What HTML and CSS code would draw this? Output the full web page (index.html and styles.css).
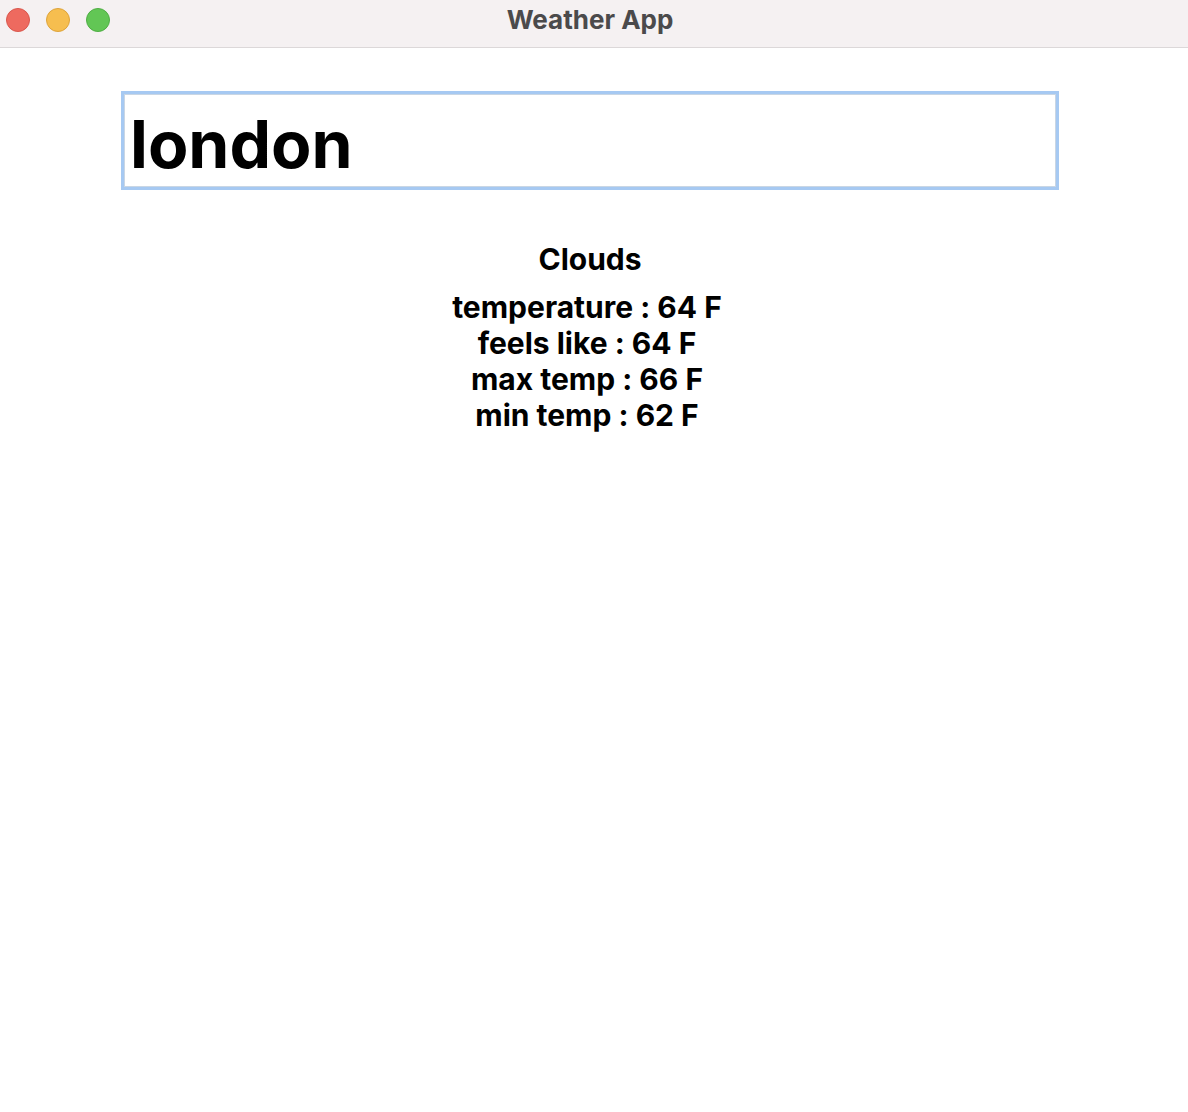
FILE: index.html
```html
<!DOCTYPE html>
<html>
<head>
<meta charset="utf-8">
<link rel="stylesheet" href="styles.css">
</head>
<body>
<div class="window">
  <header class="titlebar">
    <div class="lights">
      <span class="light red"></span>
      <span class="light yellow"></span>
      <span class="light green"></span>
    </div>
    <div class="title">Weather App</div>
  </header>
  <main class="content">
    <div class="search">
      <input class="city" type="text" value="london">
    </div>
    <section class="weather">
      <h2 class="condition">Clouds</h2>
      <div class="stats">
        <div>temperature : 64 F</div>
        <div>feels like : 64 F</div>
        <div>max temp : 66 F</div>
        <div>min temp : 62 F</div>
      </div>
    </section>
  </main>
</div>
</body>
</html>
```
FILE: styles.css
```css
html, body {
  margin: 0;
  padding: 0;
  background: #ffffff;
}
body {
  font-family: Inter, "Liberation Sans", sans-serif;
  font-feature-settings: "calt" 0, "case" 0;
  width: 1188px;
  height: 1112px;
  overflow: hidden;
}
.window {
  display: flex;
  flex-direction: column;
  height: 100%;
}
.titlebar {
  position: relative;
  height: 47px;
  background: #f5f1f2;
  border-bottom: 1px solid #dcd8d9;
  display: flex;
  align-items: center;
  justify-content: center;
}
.lights {
  position: absolute;
  left: 6px;
  top: 8px;
  display: flex;
  gap: 16px;
}
.light {
  width: 24px;
  height: 24px;
  border-radius: 50%;
  box-sizing: border-box;
}
.red { background: #ee6a5f; border: 1px solid #d9574d; }
.yellow { background: #f6be4f; border: 1px solid #dea43b; }
.green { background: #62c655; border: 1px solid #4fae44; }
.title {
  font-size: 26px;
  font-weight: 700;
  color: #4b4a4b;
  margin-top: -9px;
  margin-left: -8px;
}
.content {
  display: flex;
  flex-direction: column;
  padding-top: 43px;
}
.search {
  padding-left: 121px;
}
.city {
  box-sizing: border-box;
  width: 938px;
  height: 99px;
  border: 3px solid #a6c9f2;
  outline: none;
  box-shadow: inset 0 0 0 1px #c9d6e4;
  padding: 6px 0 0 6px;
  font-family: Inter, "Liberation Sans", sans-serif;
  font-feature-settings: "calt" 0;
  font-size: 66px;
  font-weight: 700;
  color: #000;
  background: #fff;
}
.weather {
  display: flex;
  flex-direction: column;
  align-items: center;
  margin-right: 8px;
  padding-top: 49px;
}
.condition {
  margin: 0;
  font-size: 30px;
  font-weight: 700;
  line-height: 40px;
}
.stats {
  margin-top: 10px;
  margin-right: 6px;
  text-align: center;
  font-size: 30px;
  font-weight: 700;
  line-height: 36px;
}
```
